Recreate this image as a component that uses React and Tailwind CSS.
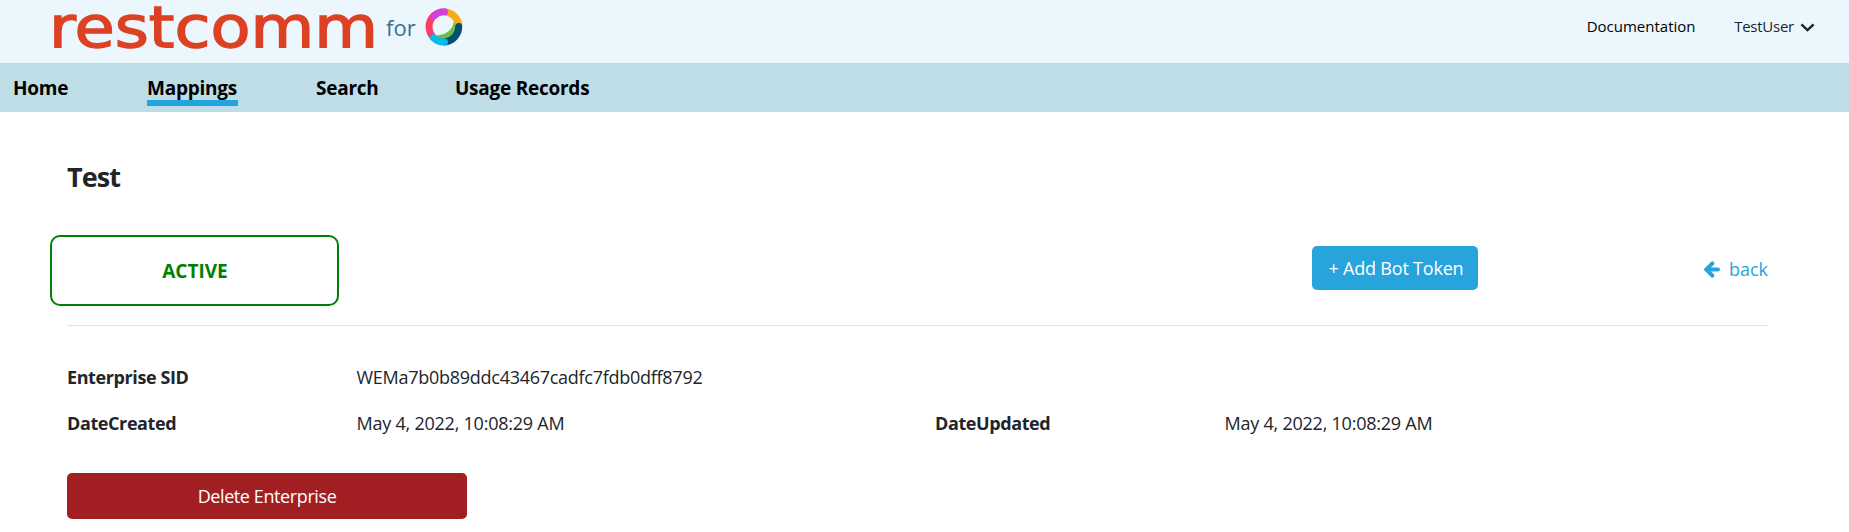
import React from "react";

const NAV = [
  { label: "Home", cls: "ml-[13px] w-[134px]" },
  { label: "Mappings", cls: "w-[169px]", active: true },
  { label: "Search", cls: "w-[139px]" },
  { label: "Usage Records", cls: "" },
];

function Wordmark() {
  return (
    <svg width="328" height="63" viewBox="0 0 328 63" className="block shrink-0 overflow-visible">
      <text
        x="-1"
        y="46.5"
        textLength="329"
        lengthAdjust="spacingAndGlyphs"
        fill="#dd4124"
        stroke="#dd4124"
        strokeWidth="1.4"
        fontSize="57"
        fontWeight="400"
        fontFamily="'DejaVu Sans', sans-serif"
      >
        restcomm
      </text>
    </svg>
  );
}

function WebexRing() {
  return (
    <svg width="38" height="38" viewBox="0 0 38 38" className="block shrink-0" fill="none" strokeLinecap="round">
      <path d="M28.6 9.5 C30 18 24.5 27.5 9.5 27.5 C15 35 31 33 32.5 17 Z" fill="#6ebe4a" />
      <path d="M20.5 3.9 A15.2 15.2 0 0 1 33.9 17" stroke="#fbab18" strokeWidth="7" />
      <path d="M33.7 18.6 A15.2 15.2 0 0 1 20 33.9" stroke="#005073" strokeWidth="7" />
      <path d="M8 29 A15.2 15.2 0 0 1 8.5 8" stroke="#ff3b69" strokeWidth="7" />
      <path d="M19.5 34 A15.2 15.2 0 0 1 8.6 30" stroke="#00bceb" strokeWidth="7" />
      <path d="M8.8 7.8 A15.2 15.2 0 0 1 19.5 3.8" stroke="#d53fdb" strokeWidth="7" />
    </svg>
  );
}

function Field({ label, value }) {
  return (
    <div className="flex w-[868px] shrink-0">
      <div className="w-[289.5px] font-bold tracking-[-0.4px]">{label}</div>
      <div>{value}</div>
    </div>
  );
}

export default function App() {
  return (
    <div className="h-[532px] overflow-hidden bg-white font-['Open_Sans',sans-serif] text-lg leading-[27px] text-[#212529]">
      <header className="flex h-[63px] items-start bg-[#ebf7fd] pl-[50px]">
        <Wordmark />
        <span className="ml-[8px] pt-[12px] text-[22px] leading-[30px] text-[#3b6f8c]">for</span>
        <div className="ml-[9px] pt-[8px]">
          <WebexRing />
        </div>
        <div className="mr-[34px] ml-auto flex pt-[15px] text-[15px] leading-[23px]">
          <span className="w-[147.5px] text-black">Documentation</span>
          <span className="tracking-[-0.25px]">TestUser</span>
          <svg width="15" height="10" viewBox="0 0 15 10" className="mt-[8px] ml-[6px]" fill="none" stroke="#212529" strokeWidth="2.4">
            <path d="M1.4 1.3 L7.5 7.2 L13.6 1.3" />
          </svg>
        </div>
      </header>

      <nav className="flex h-[49px] bg-[#bfdde7] pt-[11px] text-[19px] leading-[28px] font-bold tracking-[-0.25px] text-black">
        {NAV.map(({ label, cls, active }) => (
          <div key={label} className={cls}>
            <span className={active ? "block h-[32px] w-[91px] border-b-6 border-[#20a5de]" : "block"}>{label}</span>
          </div>
        ))}
      </nav>

      <main className="mr-[81px] ml-[67px]">
        <h1 className="pt-[46px] text-[27px] leading-[38px] font-bold tracking-[-0.9px]">Test</h1>

        <div className="-ml-[17px] mt-[39px] flex h-[90px] items-start">
          <div className="flex h-[71px] w-[289px] items-center justify-center rounded-[10px] border-2 border-[#008000] pt-[2px] pl-px text-[19px] font-bold text-[#008000]">
            ACTIVE
          </div>
          <button className="mt-[11px] ml-[973px] h-[44px] w-[166px] rounded-[5px] bg-[#28a4dd] pl-[2px] text-center tracking-[-0.2px] text-white">
            + Add Bot Token
          </button>
          <a className="mt-[21px] ml-auto flex text-[#28a4dd]">
            <svg width="16" height="17" viewBox="0 0 16 17" className="mt-[5px] mr-[9px]" fill="none" stroke="#28a4dd" strokeLinecap="round">
              <path d="M8.4 2.4 L2.4 8.5 L8.4 14.6" strokeWidth="4" />
              <path d="M3 8.5 H14" strokeWidth="4" />
            </svg>
            <span>back</span>
          </a>
        </div>
        <hr className="border-[#e1e2e3]" />

        <div className="pt-[38px]">
          <div className="tracking-[-0.27px]">
            <Field label="Enterprise SID" value="WEMa7b0b89ddc43467cadfc7fdb0dff8792" />
          </div>
          <div className="mt-[19px] flex tracking-[-0.23px]">
            <Field label="DateCreated" value="May 4, 2022, 10:08:29 AM" />
            <Field label="DateUpdated" value="May 4, 2022, 10:08:29 AM" />
          </div>
        </div>

        <button className="mt-[36px] block h-[46px] w-[400px] rounded-[5px] bg-[#a11f22] tracking-[-0.4px] text-white">
          Delete Enterprise
        </button>
      </main>
    </div>
  );
}
